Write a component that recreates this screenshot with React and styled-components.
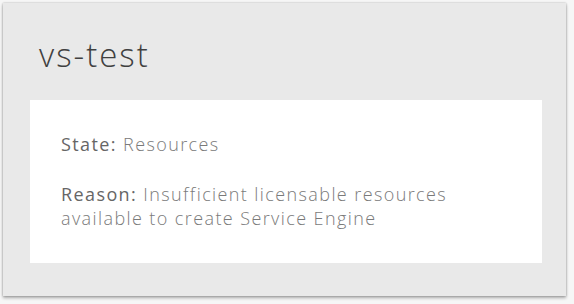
import React from 'react'
import styled, { createGlobalStyle } from 'styled-components';

const GlobalStyle = createGlobalStyle`
    html, body {
        margin: 0;
        padding: 0;
        background: #f6f6f6;
    }
    body {
        font-family: "Open Sans", "Liberation Sans", sans-serif;
    }
`;

function App() {
    return (
        <>
            <GlobalStyle />
            <Page>
                <Popover>
                    <Title>vs-test</Title>
                    <Body>
                        <Line>
                            <Label>State:</Label> Resources
                        </Line>
                        <Line spaced>
                            <Label>Reason:</Label> Insufficient licensable resources
                            available to create Service Engine
                        </Line>
                    </Body>
                </Popover>
            </Page>
        </>
    )
}

const Page = styled.div`
    width: 574px;
    height: 304px;
    padding: 3px 0 0 3px;
    box-sizing: border-box;
    overflow: hidden;
`;

const Popover = styled.div`
    width: 563px;
    height: 293px;
    box-sizing: border-box;
    background: #e9e9e9;
    box-shadow: 0 2px 3px rgba(0, 0, 0, 0.3), 0 0 2px rgba(0, 0, 0, 0.25);
    padding: 0 24px 0 27px;
    display: flex;
    flex-direction: column;
`;

const Title = styled.h1`
    margin: 0;
    height: 97px;
    padding: 32px 0 0 9px;
    box-sizing: border-box;
    font-size: 33px;
    font-weight: 300;
    letter-spacing: 2px;
    line-height: 40px;
    color: #404040;
`;

const Body = styled.div`
    height: 163px;
    background: #fff;
    padding: 32px 0 0 31px;
    box-sizing: border-box;
`;

const Line = styled.p`
    margin: ${p => p.spaced ? '26px 0 0' : '0'};
    width: 430px;
    font-size: 18px;
    font-weight: 300;
    letter-spacing: 1.4px;
    line-height: 24px;
    color: #7a7a7a;
`;

const Label = styled.span`
    color: #666;
    font-weight: 500;
`;

export default App
